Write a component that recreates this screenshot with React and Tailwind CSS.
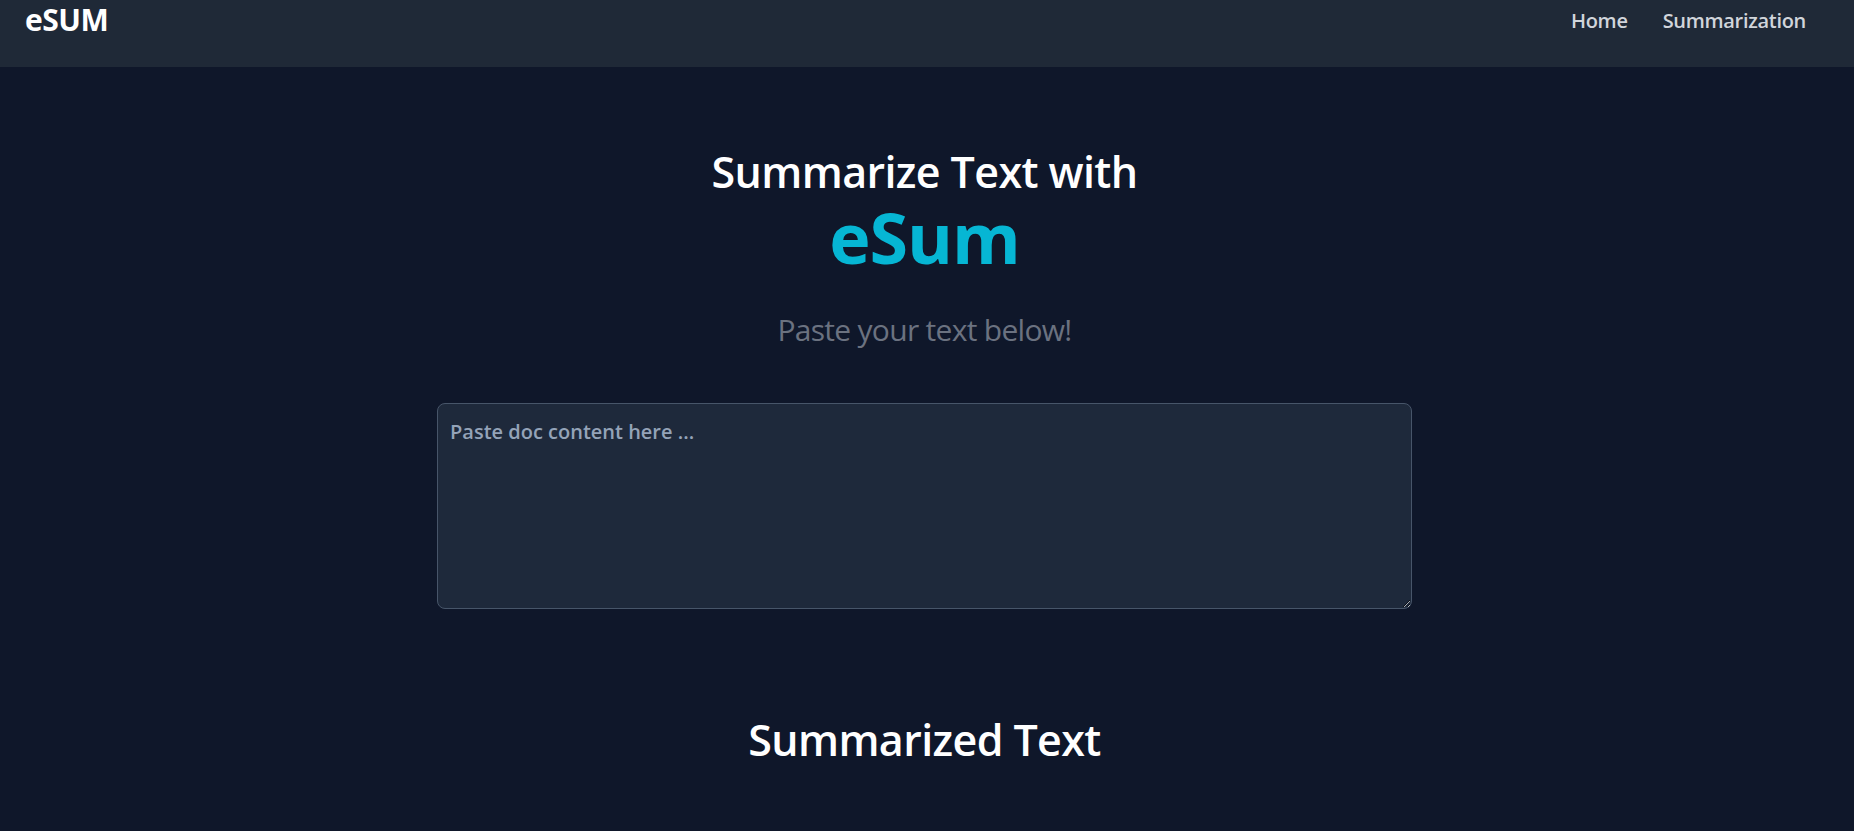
import React, { useState } from 'react';

const FONT = { fontFamily: '"Open Sans", "Noto Sans", sans-serif' };

const NavBar = () => (
    <nav className="h-[67px] bg-[#1f2937] flex items-start justify-between pl-[25px] pr-[48px]">
        <a href="#" className="pt-[2px] text-[30px] leading-[36px] font-bold tracking-[-0.5px] text-white">eSUM</a>
        <div className="flex gap-[35px] pt-[6px]">
            <a href="#" className="text-[20px] leading-[30px] font-semibold tracking-[-0.3px] text-[#d1d5db] hover:text-white">Home</a>
            <a href="#" className="text-[20px] leading-[30px] font-semibold tracking-[-0.3px] text-[#d1d5db] hover:text-white">Summarization</a>
        </div>
    </nav>
);

const App = () => {
    const [text, setText] = useState('');

    return (
        <div className="min-h-screen bg-[#0f172a]" style={FONT}>
            <NavBar />

            <main className="flex flex-col items-center pr-[5px]">
                <h1 className="mt-[82px] text-[43px] leading-[46px] font-semibold tracking-[-0.6px] text-white">Summarize Text with</h1>
                <h2 className="mt-[7px] text-[70px] leading-none font-bold tracking-[-1px] text-[#06b6d4]">eSum</h2>
                <p className="mt-[40px] text-[30px] leading-[36px] font-normal tracking-[-0.7px] text-[#6b7280]">Paste your text below!</p>

                {/* 입력 영역 */}
                <textarea
                    value={text}
                    onChange={(e) => setText(e.target.value)}
                    placeholder="Paste doc content here ..."
                    className="mt-[55px] w-[975px] h-[206px] px-[12px] pt-[14px] bg-[#1e293b] border border-[#475569] rounded-lg text-[20px] leading-[28px] font-semibold text-white placeholder:text-[#94a3b8] outline-none"
                />

                <h2 className="mt-[105px] text-[43px] leading-[52px] font-semibold tracking-[-0.6px] text-white">Summarized Text</h2>
            </main>
        </div>
    );
};

export default App;
